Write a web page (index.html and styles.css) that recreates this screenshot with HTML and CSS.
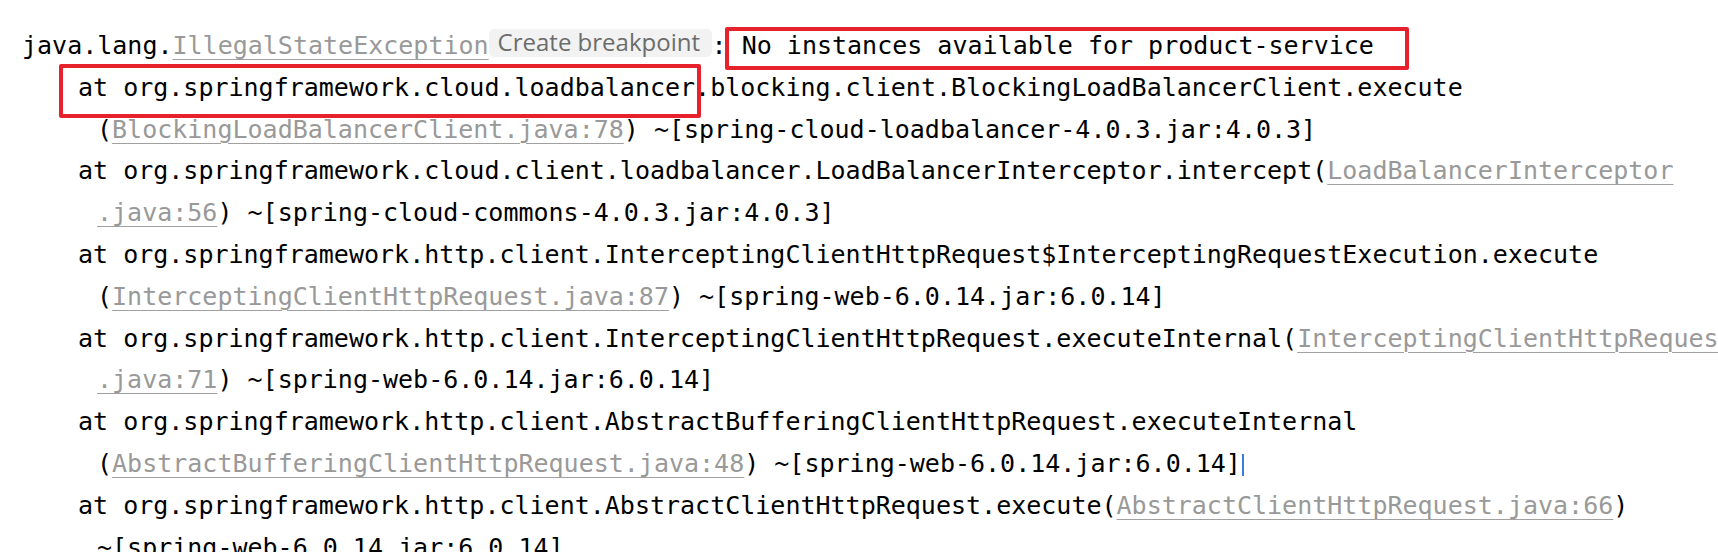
FILE: index.html
```html
<!DOCTYPE html>
<html lang="en">
  <head>
    <meta charset="UTF-8" />
    <meta name="viewport" content="width=device-width, initial-scale=1.0" />
    <title>Console</title>
    <link rel="stylesheet" href="styles.css">
  </head>
  <body>
    <div class="console">
      <div class="line">java.lang.<a class="link">IllegalStateException</a><span class="hint">Create breakpoint</span>: <span class="mark mark-msg">No instances available for product-service</span></div>
      <div class="line frame"><span class="mark mark-at">at org.springframework.cloud.loadbalancer</span>.blocking.client.BlockingLoadBalancerClient.execute</div>
      <div class="line wrap">(<a class="link">BlockingLoadBalancerClient.java:78</a>) ~[spring-cloud-loadbalancer-4.0.3.jar:4.0.3]</div>
      <div class="line frame">at org.springframework.cloud.client.loadbalancer.LoadBalancerInterceptor.intercept(<a class="link">LoadBalancerInterceptor</a></div>
      <div class="line wrap"><a class="link">.java:56</a>) ~[spring-cloud-commons-4.0.3.jar:4.0.3]</div>
      <div class="line frame">at org.springframework.http.client.InterceptingClientHttpRequest$InterceptingRequestExecution.execute</div>
      <div class="line wrap">(<a class="link">InterceptingClientHttpRequest.java:87</a>) ~[spring-web-6.0.14.jar:6.0.14]</div>
      <div class="line frame">at org.springframework.http.client.InterceptingClientHttpRequest.executeInternal(<a class="link">InterceptingClientHttpRequest</a></div>
      <div class="line wrap"><a class="link">.java:71</a>) ~[spring-web-6.0.14.jar:6.0.14]</div>
      <div class="line frame">at org.springframework.http.client.AbstractBufferingClientHttpRequest.executeInternal</div>
      <div class="line wrap">(<a class="link">AbstractBufferingClientHttpRequest.java:48</a>) ~[spring-web-6.0.14.jar:6.0.14]<span class="caret"></span></div>
      <div class="line frame">at org.springframework.http.client.AbstractClientHttpRequest.execute(<a class="link">AbstractClientHttpRequest.java:66</a>)</div>
      <div class="line wrap">~[spring-web-6.0.14.jar:6.0.14]</div>
    </div>
  </body>
</html>
```

FILE: styles.css
```css
html,
body {
  margin: 0;
  background: #ffffff;
  overflow: hidden;
}

.console {
  padding: 25px 0 0 22px;
  font-family: "DejaVu Sans Mono", "Liberation Mono", monospace;
  font-size: 25px;
  line-height: 41.8px;
  color: #000000;
}

.line {
  white-space: pre;
}

.frame {
  padding-left: 56px;
}

.wrap {
  padding-left: 75px;
}

.link {
  color: #999999;
  text-decoration: underline;
  text-decoration-color: #a0a0a0;
  text-underline-offset: 5px;
  text-decoration-thickness: 1px;
}

.hint {
  display: inline-block;
  height: 28px;
  width: 223px;
  padding: 0 0 0 9px;
  box-sizing: border-box;
  background: #f2f2f2;
  border-radius: 5px;
  color: #6c6c6c;
  font-family: "Open Sans", "Noto Sans", sans-serif;
  font-size: 24px;
  line-height: 26px;
  vertical-align: 3px;
}

.mark {
  position: relative;
}

.mark::after {
  content: "";
  position: absolute;
  border: 4px solid #e8222d;
  border-radius: 2px;
}

.mark-msg::after {
  left: -17px;
  right: -35px;
  top: -4px;
  bottom: -10px;
}

.mark-at::after {
  left: -19px;
  right: -6px;
  top: -9px;
  bottom: -16px;
}

.caret {
  display: inline-block;
  width: 2px;
  height: 22px;
  margin-left: 1px;
  background: #3b7ddd;
  vertical-align: -4px;
}
```
